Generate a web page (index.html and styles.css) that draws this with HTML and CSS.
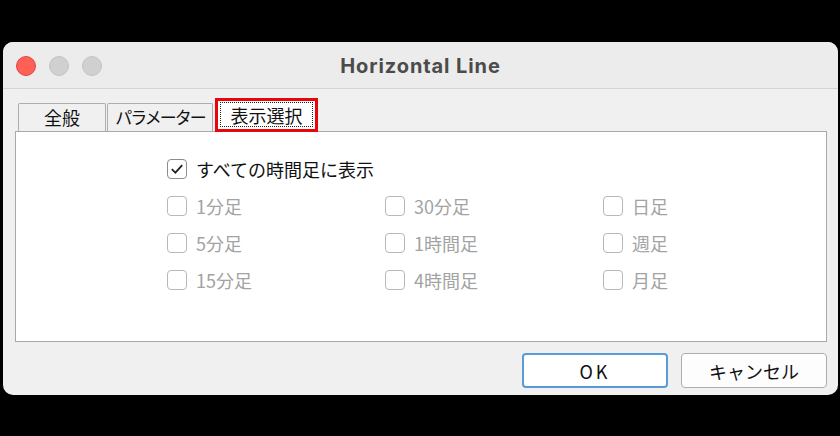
FILE: index.html
```html
<!DOCTYPE html>
<html lang="ja">
<head>
<meta charset="utf-8">
<link rel="stylesheet" href="styles.css">
</head>
<body>
<div class="window">
  <div class="titlebar">
    <div class="lights">
      <span class="light red"></span>
      <span class="light grey"></span>
      <span class="light grey"></span>
    </div>
    <div class="title">Horizontal Line</div>
    <div></div>
  </div>
  <div class="body">
    <div class="tabs">
      <div class="tab t1">全般</div>
      <div class="tab t2">パラメーター</div>
      <div class="tab active"><span class="focus">表示選択</span></div>
    </div>
    <div class="panel">
      <div class="grid">
        <label class="item all"><span class="box checked"><svg viewBox="0 0 20 20" width="20" height="20"><path d="M4.8 10.2 L8.4 13.6 L15.2 6.2" fill="none" stroke="#222" stroke-width="1.8"/></svg></span><span class="lbl">すべての時間足に表示</span></label>
        <label class="item off"><span class="box"></span><span class="lbl">1分足</span></label>
        <label class="item off"><span class="box"></span><span class="lbl">30分足</span></label>
        <label class="item off"><span class="box"></span><span class="lbl">日足</span></label>
        <label class="item off"><span class="box"></span><span class="lbl">5分足</span></label>
        <label class="item off"><span class="box"></span><span class="lbl">1時間足</span></label>
        <label class="item off"><span class="box"></span><span class="lbl">週足</span></label>
        <label class="item off"><span class="box"></span><span class="lbl">15分足</span></label>
        <label class="item off"><span class="box"></span><span class="lbl">4時間足</span></label>
        <label class="item off"><span class="box"></span><span class="lbl">月足</span></label>
      </div>
    </div>
    <div class="buttons">
      <button class="btn ok">OK</button>
      <button class="btn">キャンセル</button>
    </div>
  </div>
</div>
</body>
</html>
```
FILE: styles.css
```css
html, body {
  margin: 0;
  padding: 0;
  background: #000;
}
body {
  width: 840px;
  height: 436px;
  overflow: hidden;
  font-family: "Noto Sans CJK JP", "Liberation Sans", sans-serif;
}
.window {
  margin: 42px 0 0 3px;
  width: 835px;
  height: 353px;
  border-radius: 10px;
  background: #f0f0f0;
  overflow: hidden;
}
.titlebar {
  height: 46px;
  background: #ececec;
  border-bottom: 1px solid #d4d4d4;
  display: grid;
  grid-template-columns: 1fr auto 1fr;
  align-items: center;
}
.lights {
  display: flex;
  gap: 13px;
  padding-left: 13px;
  padding-top: 2px;
}
.light {
  width: 20px;
  height: 20px;
  border-radius: 50%;
  box-sizing: border-box;
}
.light.red {
  background: #fe5f57;
  border: 1px solid #e14942;
}
.light.grey {
  background: #d0d0d0;
  border: 1px solid #c4c4c4;
}
.title {
  font-family: "Inter", "Liberation Sans", sans-serif;
  font-weight: 700;
  font-size: 20px;
  letter-spacing: 0.9px;
  color: #4b4b4b;
  padding-top: 2px;
}
.body {
  padding: 8px 11px 0 12px;
}
.tabs {
  display: flex;
  align-items: flex-end;
  height: 34px;
  padding-left: 3px;
}
.tab {
  box-sizing: border-box;
  height: 28px;
  border: 1px solid #adadad;
  border-bottom: none;
  border-radius: 2px 2px 0 0;
  background: #f0f0f0;
  font-size: 18px;
  line-height: 26px;
  color: #111;
  text-align: center;
  white-space: nowrap;
  overflow: hidden;
}
.t1 { width: 88px; }
.t2 {
  width: 106px;
  margin-left: 1px;
  font-size: 17px;
  letter-spacing: -2px;
}
.tab.active {
  width: 103px;
  height: 34px;
  margin-left: 2px;
  margin-bottom: -1px;
  border: 3px solid #e8060b;
  border-radius: 0;
  background: #fff;
  padding: 1px 2px 2px;
  position: relative;
  z-index: 1;
}
.focus {
  display: block;
  height: 100%;
  box-sizing: border-box;
  border: 1px dotted #222;
  line-height: 24px;
}
.panel {
  box-sizing: border-box;
  width: 812px;
  height: 211px;
  border: 1px solid #a9a9a9;
  background: #fff;
  padding: 18px 0 0 151px;
}
.grid {
  display: grid;
  grid-template-columns: 218px 218px 218px;
  grid-auto-rows: 37px;
}
.item {
  display: flex;
  align-items: center;
  gap: 9px;
  font-size: 18px;
}
.item.all {
  grid-column: 1 / 4;
  color: #111;
}
.item.off { color: #a3a3a3; }
.box {
  box-sizing: border-box;
  width: 20px;
  height: 20px;
  border: 1.5px solid #b8b8b8;
  border-radius: 4px;
  display: flex;
  align-items: center;
  justify-content: center;
}
.box.checked { border-color: #8c8c8c; }
.box svg { display: block; flex: none; }
.buttons {
  display: flex;
  justify-content: flex-end;
  gap: 13px;
  margin-top: 11px;
  padding-right: 0;
}
.btn {
  box-sizing: border-box;
  width: 146px;
  height: 35px;
  border: 1px solid #adadad;
  border-radius: 4px;
  background: #fdfdfd;
  font-family: "Noto Sans CJK JP", "Liberation Sans", sans-serif;
  font-size: 18px;
  color: #111;
  padding: 0;
}
.btn.ok {
  border: 2px solid #5a9ad8;
  background: #fff;
  letter-spacing: 3px;
}
```
